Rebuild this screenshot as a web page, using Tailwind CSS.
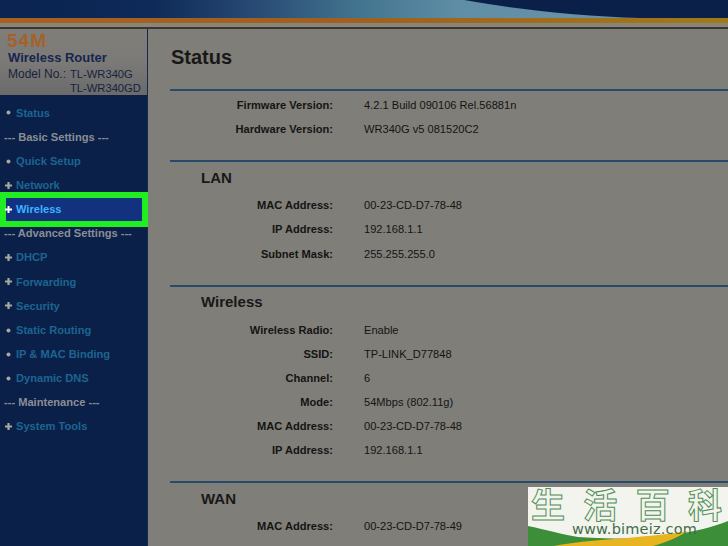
<!DOCTYPE html>
<html>
<head>
<meta charset="utf-8">
<script src="https://cdn.jsdelivr.net/npm/@tailwindcss/browser@4"></script>
</head>
<body class="m-0">
<div class="relative w-[728px] h-[546px] overflow-hidden bg-[#807e78] font-['Liberation_Sans',Arial,sans-serif] flex flex-col">
  <!-- Banner -->
  <div class="shrink-0 h-[18px] relative overflow-hidden bg-[#0a2048]">
    <svg class="absolute inset-0" width="728" height="18" viewBox="0 0 728 18">
      <defs><linearGradient id="g" x1="0" x2="1" y1="0" y2="0">
        <stop offset="0" stop-color="#0a2350"/><stop offset="0.24" stop-color="#0e2a58"/><stop offset="0.42" stop-color="#2c4f78"/><stop offset="0.56" stop-color="#43748f"/><stop offset="0.72" stop-color="#5f8ea6"/><stop offset="1" stop-color="#6c93a6"/>
      </linearGradient></defs>
      <path d="M0 0H464C520 10 580 16 640 18H0Z" fill="url(#g)"/>
    </svg>
  </div>
  <div class="shrink-0 h-[5px] bg-gradient-to-r from-[#a8601f] via-[#a0601e] to-[#a07a18]"></div>
  <div class="shrink-0 h-[4px] bg-[#8a857b]"></div>
  <div class="shrink-0 h-[2px] bg-[#3a3632]"></div>
  <div class="flex flex-1 min-h-0">
    <!-- Sidebar -->
    <aside class="w-[148px] shrink-0 flex flex-col border-r border-[#142a4a]">
      <div class="h-[66px] shrink-0 bg-gradient-to-b from-[#807e78] via-[#7b7a77] to-[#6a6a6b] pl-[7px] pt-[3px] leading-none">
        <div class="text-[#a5612a] text-[19px] tracking-[1px] font-bold leading-[18px]">54M</div>
        <div class="text-[#16264f] text-[13px] font-bold leading-[15px] pl-px">Wireless Router</div>
        <div class="flex text-[#17233f] leading-[14px] mt-[2px] pl-px">
          <span class="w-[62px] text-[12px]">Model No.:</span>
          <span class="text-[11.2px]">TL-WR340G</span>
        </div>
        <div class="text-[#17233f] text-[11.2px] leading-[14px] pl-[63px]">TL-WR340GD</div>
      </div>
      <nav class="flex-1 bg-[#0a2048] pt-[5.8px] text-[11.1px] font-bold">
        <div class="h-[24.15px] flex items-center pl-[5px] text-[#1d6590]"><svg class="w-[11px] h-[7px] shrink-0" viewBox="0 0 11 7"><circle cx="3.5" cy="3.5" r="2" fill="#a8a89e"/></svg>Status</div>
        <div class="h-[24.15px] flex items-center pl-[4px] text-[#8b8d95]">--- Basic Settings ---</div>
        <div class="h-[24.15px] flex items-center pl-[5px] text-[#1d6590]"><svg class="w-[11px] h-[7px] shrink-0" viewBox="0 0 11 7"><circle cx="3.5" cy="3.5" r="2" fill="#a8a89e"/></svg>Quick Setup</div>
        <div class="h-[24.15px] flex items-center pl-[5px] text-[#1d6590]"><svg class="w-[11px] h-[7px] shrink-0" viewBox="0 0 11 7"><path d="M3.5 0V7M0 3.5H7" stroke="#a8a89e" stroke-width="2.2"/></svg>Network</div>
        <div class="h-[24.15px] relative flex items-center pl-[5px] text-[#3cb4ff]">
          <div class="absolute left-0 top-[-5px] w-[148px] h-[35px] border-[6px] border-[#22ec22] bg-[#12317f]"></div>
          <svg class="relative w-[11px] h-[7px] shrink-0" viewBox="0 0 11 7"><path d="M3.5 0V7M0 3.5H7" stroke="#ffffff" stroke-width="2"/></svg><span class="relative">Wireless</span>
        </div>
        <div class="h-[24.15px] flex items-center pl-[4px] text-[#8b8d95]">--- Advanced Settings ---</div>
        <div class="h-[24.15px] flex items-center pl-[5px] text-[#1d6590]"><svg class="w-[11px] h-[7px] shrink-0" viewBox="0 0 11 7"><path d="M3.5 0V7M0 3.5H7" stroke="#a8a89e" stroke-width="2.2"/></svg>DHCP</div>
        <div class="h-[24.15px] flex items-center pl-[5px] text-[#1d6590]"><svg class="w-[11px] h-[7px] shrink-0" viewBox="0 0 11 7"><path d="M3.5 0V7M0 3.5H7" stroke="#a8a89e" stroke-width="2.2"/></svg>Forwarding</div>
        <div class="h-[24.15px] flex items-center pl-[5px] text-[#1d6590]"><svg class="w-[11px] h-[7px] shrink-0" viewBox="0 0 11 7"><path d="M3.5 0V7M0 3.5H7" stroke="#a8a89e" stroke-width="2.2"/></svg>Security</div>
        <div class="h-[24.15px] flex items-center pl-[5px] text-[#1d6590]"><svg class="w-[11px] h-[7px] shrink-0" viewBox="0 0 11 7"><circle cx="3.5" cy="3.5" r="2" fill="#a8a89e"/></svg>Static Routing</div>
        <div class="h-[24.15px] flex items-center pl-[5px] text-[#1d6590]"><svg class="w-[11px] h-[7px] shrink-0" viewBox="0 0 11 7"><circle cx="3.5" cy="3.5" r="2" fill="#a8a89e"/></svg>IP &amp; MAC Binding</div>
        <div class="h-[24.15px] flex items-center pl-[5px] text-[#1d6590]"><svg class="w-[11px] h-[7px] shrink-0" viewBox="0 0 11 7"><circle cx="3.5" cy="3.5" r="2" fill="#a8a89e"/></svg>Dynamic DNS</div>
        <div class="h-[24.15px] flex items-center pl-[4px] text-[#8b8d95]">--- Maintenance ---</div>
        <div class="h-[24.15px] flex items-center pl-[5px] text-[#1d6590]"><svg class="w-[11px] h-[7px] shrink-0" viewBox="0 0 11 7"><path d="M3.5 0V7M0 3.5H7" stroke="#a8a89e" stroke-width="2.2"/></svg>System Tools</div>
      </nav>
    </aside>
    <!-- Main -->
    <main class="flex-1 pl-[22px] text-[#141414] text-[11.1px]">
      <h1 class="h-[60px] pt-[14px] pl-[1px] text-[20px] leading-[28px] font-bold text-[#181818]">Status</h1>
      <div class="h-[2px] bg-[#27496c]"></div>
      <section class="pt-[2.5px] h-[69px]">
        <div class="h-[24.15px] flex items-center"><span class="w-[163px] text-right font-bold">Firmware Version:</span><span class="pl-[31px]">4.2.1 Build 090106 Rel.56881n</span></div>
        <div class="h-[24.15px] flex items-center"><span class="w-[163px] text-right font-bold">Hardware Version:</span><span class="pl-[31px]">WR340G v5 081520C2</span></div>
      </section>
      <div class="h-[2px] bg-[#27496c]"></div>
      <section class="h-[123px]">
        <h2 class="h-[31.5px] pl-[31px] pt-[6px] text-[15px] leading-[20px] font-bold text-[#181818]">LAN</h2>
        <div class="h-[24.15px] flex items-center"><span class="w-[163px] text-right font-bold">MAC Address:</span><span class="pl-[31px]">00-23-CD-D7-78-48</span></div>
        <div class="h-[24.15px] flex items-center"><span class="w-[163px] text-right font-bold">IP Address:</span><span class="pl-[31px]">192.168.1.1</span></div>
        <div class="h-[24.15px] flex items-center"><span class="w-[163px] text-right font-bold">Subnet Mask:</span><span class="pl-[31px]">255.255.255.0</span></div>
      </section>
      <div class="h-[2px] bg-[#27496c]"></div>
      <section class="h-[194px]">
        <h2 class="h-[31px] pl-[31px] pt-[5px] text-[15px] leading-[20px] font-bold text-[#181818]">Wireless</h2>
        <div class="h-[24.15px] flex items-center"><span class="w-[163px] text-right font-bold">Wireless Radio:</span><span class="pl-[31px]">Enable</span></div>
        <div class="h-[24.15px] flex items-center"><span class="w-[163px] text-right font-bold">SSID:</span><span class="pl-[31px]">TP-LINK_D77848</span></div>
        <div class="h-[24.15px] flex items-center"><span class="w-[163px] text-right font-bold">Channel:</span><span class="pl-[31px]">6</span></div>
        <div class="h-[24.15px] flex items-center"><span class="w-[163px] text-right font-bold">Mode:</span><span class="pl-[31px]">54Mbps (802.11g)</span></div>
        <div class="h-[24.15px] flex items-center"><span class="w-[163px] text-right font-bold">MAC Address:</span><span class="pl-[31px]">00-23-CD-D7-78-48</span></div>
        <div class="h-[24.15px] flex items-center"><span class="w-[163px] text-right font-bold">IP Address:</span><span class="pl-[31px]">192.168.1.1</span></div>
      </section>
      <div class="h-[2px] bg-[#27496c]"></div>
      <section>
        <h2 class="h-[31.5px] pl-[31px] pt-[6px] text-[15px] leading-[20px] font-bold text-[#181818]">WAN</h2>
        <div class="h-[24.15px] flex items-center"><span class="w-[163px] text-right font-bold">MAC Address:</span><span class="pl-[31px]">00-23-CD-D7-78-49</span></div>
      </section>
    </main>
  </div>
  <!-- Watermark -->
  <div class="absolute left-[528px] top-[487px] w-[200px] h-[59px] bg-[#f4f4ee] overflow-hidden">
    <svg class="absolute inset-0" width="200" height="59" viewBox="0 0 200 59">
      <path d="M0 39C20 43 36 48 50 50C100 54 160 50 200 34V59H0Z" fill="#3c8f38"/>
      <path d="M26 59C60 52 110 52 160 44C150 50 140 55 125 59Z" fill="#e8b420"/>
    </svg>
    <div class="relative h-[34px] flex justify-between pl-[3px] pr-[6px] text-[34px] leading-[34px] font-bold font-['Noto_Sans_CJK_SC',sans-serif] text-[#f4f4ee] [-webkit-text-stroke:1px_#4f8f58]">
      <span>生</span><span>活</span><span>百</span><span>科</span>
    </div>
    <div class="absolute left-[44px] top-[34px] text-[#3f6e4a] text-[14.5px] leading-[16px] tracking-[0.2px] font-['DejaVu_Sans',sans-serif]">www.bimeiz.com</div>
  </div>
</div>
</body>
</html>
